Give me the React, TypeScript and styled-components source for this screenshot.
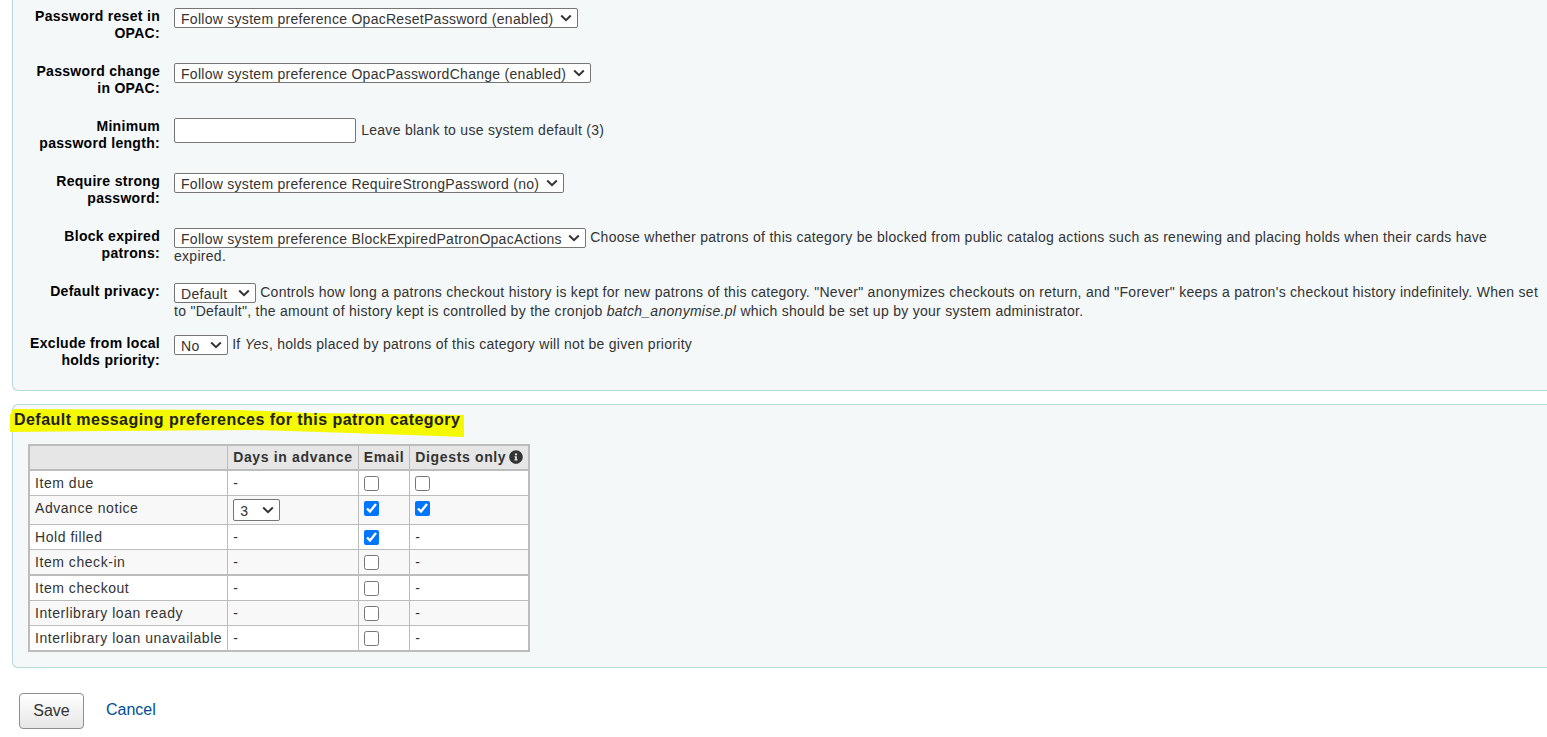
import React from "react";
import styled, { createGlobalStyle } from "styled-components";

const chevron =
  "url(\"data:image/svg+xml,%3Csvg xmlns='http://www.w3.org/2000/svg' width='12' height='8' viewBox='0 0 12 8'%3E%3Cpath d='M1.2 1.5 6 6.2 10.8 1.5' fill='none' stroke='%23333' stroke-width='2'/%3E%3C/svg%3E\")";

const GlobalStyle = createGlobalStyle`
  html, body {
    margin: 0;
    padding: 0;
    background: #fff;
    overflow: hidden;
  }
  body {
    font-family: "Liberation Sans", Arial, sans-serif;
    font-size: 14px;
    line-height: 17px;
    letter-spacing: 0.28px;
    color: #333;
  }
`;

const Panel = styled.div<{ $open?: boolean }>`
  position: relative;
  margin-left: 12px;
  margin-top: ${(p) => (p.$open ? 0 : 13)}px;
  background: #f4f8f9;
  border: 1px solid #b9d8d9;
  border-right: none;
  border-top: ${(p) => (p.$open ? "none" : "1px solid #b9d8d9")};
  border-radius: ${(p) => (p.$open ? "0 0 0 6px" : "6px 0 0 6px")};
`;

const FormList = styled.ol`
  list-style: none;
  margin: 0;
  padding: 8px 0 21px 13px;
`;

const FormRow = styled.li<{ $gap?: number }>`
  display: grid;
  grid-template-columns: 134px 1fr;
  column-gap: 14px;
  margin-bottom: ${(p) => p.$gap ?? 21}px;
  &:last-child {
    margin-bottom: 0;
  }
`;

const RowLabel = styled.label`
  font-weight: bold;
  color: #000;
  text-align: right;
  letter-spacing: 0.3px;
`;

const RowField = styled.div`
  padding-right: 4px;
  min-height: 34px;
`;

const Select = styled.select<{ $width?: number }>`
  appearance: none;
  font-family: "Liberation Sans", Arial, sans-serif;
  font-size: 14px;
  letter-spacing: 0.28px;
  height: 20px;
  ${(p) => (p.$width ? `width: ${p.$width}px;` : "")}
  padding: 1px 23px 0 6px;
  color: #333;
  background: #fff ${chevron} no-repeat right 5px center;
  border: 1px solid #767676;
  border-radius: 2px;
  vertical-align: middle;
`;

const DaysSelect = styled(Select)`
  height: 22px;
`;

const TextInput = styled.input`
  width: 182px;
  height: 25px;
  box-sizing: border-box;
  margin-right: 1px;
  background: #fff;
  border: 1px solid #767676;
  border-radius: 2px;
  padding: 1px 2px;
`;

const Hint = styled.span`
  color: #333;
`;

const LegendWrap = styled.div`
  position: relative;
  height: 39px;
`;

const Marker = styled.svg`
  position: absolute;
  left: -3px;
  top: 0;
  width: 460px;
  height: 36px;
`;

const Legend = styled.h3`
  position: relative;
  margin: 0;
  padding: 6px 0 0 1px;
  font-size: 16px;
  line-height: 18px;
  font-weight: bold;
  letter-spacing: 0.46px;
  color: #222;
`;

const TableWrap = styled.div`
  padding: 0 0 15px 15px;
`;

const Table = styled.table`
  border-collapse: collapse;
  border: 2px solid #bcbcbc;
  color: #333;
  letter-spacing: 0.55px;
`;

const Th = styled.th`
  background: #e6e6e6;
  border: 1px solid #bcbcbc;
  border-bottom: 2px solid #bcbcbc;
  padding: 0 5px;
  height: 23px;
  font-weight: bold;
  text-align: left;
  white-space: nowrap;
  letter-spacing: 0.65px;
`;

const Tr = styled.tr<{ $heavy?: boolean }>`
  background: #fff;
  &:nth-child(even) {
    background: #f8f8f8;
  }
  ${(p) => (p.$heavy ? "border-bottom: 2px solid #bcbcbc;" : "")}
`;

const Td = styled.td`
  border: 1px solid #bcbcbc;
  padding: 3px 5px;
  height: 18px;
  white-space: nowrap;
  line-height: 18px;
  vertical-align: top;
`;

const Check = styled.input`
  display: block;
  width: 15px;
  height: 15px;
  margin: 2px 0 0 0;
`;

const Actions = styled.div`
  display: flex;
  align-items: center;
  gap: 22px;
  padding: 25px 0 0 19px;
`;

const SaveButton = styled.button`
  width: 65px;
  height: 36px;
  font-family: "Liberation Sans", Arial, sans-serif;
  font-size: 16px;
  color: #333;
  background: linear-gradient(#fff, #e6e6e6);
  border: 1px solid #8e8e8e;
  border-radius: 4px;
`;

const CancelLink = styled.a`
  color: #004d99;
  font-size: 16px;
  letter-spacing: 0;
  text-decoration: none;
  margin-top: -3px;
`;

const InfoGlyph = styled.svg`
  width: 14px;
  height: 14px;
  margin-left: -2px;
  vertical-align: -2px;
  fill: #333;
`;

const InfoIcon = () => (
  <InfoGlyph viewBox="0 0 512 512">
    <path d="M256 8C119 8 8 119 8 256s111 248 248 248 248-111 248-248S393 8 256 8zm0 110a42 42 0 1 1 0 84 42 42 0 0 1 0-84zm56 254c0 7-5 12-12 12h-88c-7 0-12-5-12-12v-24c0-7 5-12 12-12h12v-64h-12c-7 0-12-5-12-12v-24c0-7 5-12 12-12h64c7 0 12 5 12 12v100h12c7 0 12 5 12 12z" />
  </InfoGlyph>
);

type Pref = {
  name: string;
  days?: boolean;
  email: boolean;
  digest: boolean | null;
  heavy?: boolean;
};

const prefs: Pref[] = [
  { name: "Item due", email: false, digest: false },
  { name: "Advance notice", days: true, email: true, digest: true },
  { name: "Hold filled", email: true, digest: null },
  { name: "Item check-in", email: false, digest: null, heavy: true },
  { name: "Item checkout", email: false, digest: null },
  { name: "Interlibrary loan ready", email: false, digest: null },
  { name: "Interlibrary loan unavailable", email: false, digest: null },
];

export default function App() {
  return (
    <>
      <GlobalStyle />
      <Panel $open>
        <FormList>
          <FormRow>
            <RowLabel>Password reset in OPAC:</RowLabel>
            <RowField>
              <Select defaultValue="a">
                <option value="a">Follow system preference OpacResetPassword (enabled)</option>
              </Select>
            </RowField>
          </FormRow>
          <FormRow>
            <RowLabel>Password change in OPAC:</RowLabel>
            <RowField>
              <Select defaultValue="a">
                <option value="a">Follow system preference OpacPasswordChange (enabled)</option>
              </Select>
            </RowField>
          </FormRow>
          <FormRow>
            <RowLabel>Minimum password length:</RowLabel>
            <RowField>
              <TextInput type="text" /> <Hint>Leave blank to use system default (3)</Hint>
            </RowField>
          </FormRow>
          <FormRow>
            <RowLabel>Require strong password:</RowLabel>
            <RowField>
              <Select defaultValue="a">
                <option value="a">Follow system preference RequireStrongPassword (no)</option>
              </Select>
            </RowField>
          </FormRow>
          <FormRow $gap={18}>
            <RowLabel>Block expired patrons:</RowLabel>
            <RowField>
              <Select defaultValue="a">
                <option value="a">Follow system preference BlockExpiredPatronOpacActions</option>
              </Select>{" "}
              <Hint>
                Choose whether patrons of this category be blocked from public catalog actions such as
                renewing and placing holds when their cards have expired.
              </Hint>
            </RowField>
          </FormRow>
          <FormRow $gap={15}>
            <RowLabel>Default privacy:</RowLabel>
            <RowField>
              <Select defaultValue="a" $width={82}>
                <option value="a">Default</option>
                <option value="b">Never</option>
                <option value="c">Forever</option>
              </Select>{" "}
              <Hint>
                Controls how long a patrons checkout history is kept for new patrons of this category.
                "Never" anonymizes checkouts on return, and "Forever" keeps a patron's checkout history
                indefinitely. When set to "Default", the amount of history kept is controlled by the
                cronjob <em>batch_anonymise.pl</em> which should be set up by your system administrator.
              </Hint>
            </RowField>
          </FormRow>
          <FormRow>
            <RowLabel>Exclude from local holds priority:</RowLabel>
            <RowField>
              <Select defaultValue="a" $width={54}>
                <option value="a">No</option>
                <option value="b">Yes</option>
              </Select>{" "}
              <Hint>
                If <em>Yes</em>, holds placed by patrons of this category will not be given priority
              </Hint>
            </RowField>
          </FormRow>
        </FormList>
      </Panel>
      <Panel>
        <LegendWrap>
          <Marker viewBox="0 0 460 36">
            <path
              d="M3 4 L230 5 L300 8 L454 10 L454 32 L400 30 L310 27 L240 25 L100 26 L0 27 L0 10 Z"
              fill="#f5f900"
            />
          </Marker>
          <Legend>Default messaging preferences for this patron category</Legend>
        </LegendWrap>
        <TableWrap>
          <Table>
            <thead>
              <tr>
                <Th />
                <Th>Days in advance</Th>
                <Th>Email</Th>
                <Th>
                  Digests only <InfoIcon />
                </Th>
              </tr>
            </thead>
            <tbody>
              {prefs.map((pref) => (
                <Tr key={pref.name} $heavy={pref.heavy}>
                  <Td>{pref.name}</Td>
                  <Td>
                    {pref.days ? (
                      <DaysSelect defaultValue="3" $width={47}>
                        <option value="3">3</option>
                      </DaysSelect>
                    ) : (
                      "-"
                    )}
                  </Td>
                  <Td>
                    <Check type="checkbox" defaultChecked={pref.email} />
                  </Td>
                  <Td>
                    {pref.digest === null ? (
                      "-"
                    ) : (
                      <Check type="checkbox" defaultChecked={pref.digest} />
                    )}
                  </Td>
                </Tr>
              ))}
            </tbody>
          </Table>
        </TableWrap>
      </Panel>
      <Actions>
        <SaveButton>Save</SaveButton>
        <CancelLink href="#">Cancel</CancelLink>
      </Actions>
    </>
  );
}
